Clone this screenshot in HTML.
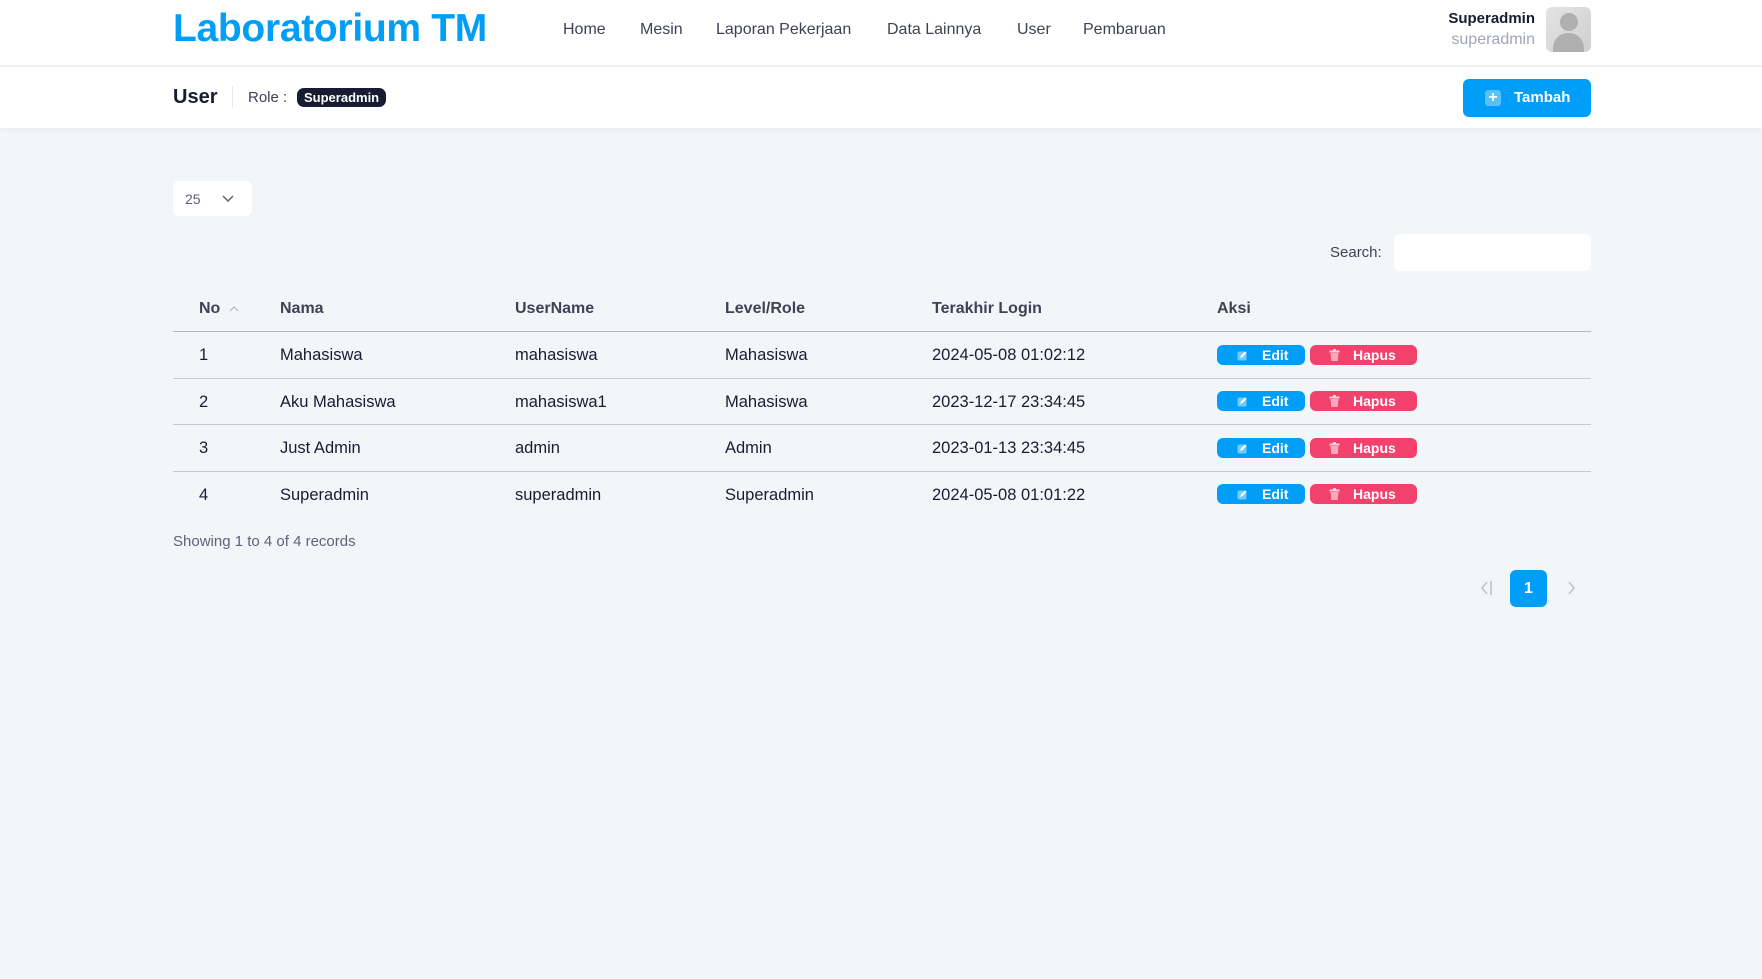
<!DOCTYPE html>
<html><head><meta charset="utf-8"><style>
*{margin:0;padding:0;box-sizing:border-box}
body{width:1762px;height:979px;background:#f3f6f9;font-family:"Liberation Sans",sans-serif;color:#3f4254;position:relative;overflow:hidden}
.a{position:absolute;white-space:nowrap}
.hdr{position:absolute;left:0;top:0;width:1762px;height:66px;background:#fff;border-bottom:1px solid #eef0f4}
.sub{position:absolute;left:0;top:67px;width:1762px;height:61px;background:#fff;box-shadow:0 2px 6px rgba(0,0,0,.04)}
.nav{font-size:16px;color:#3f4254;top:21px}
.th{font-size:16px;font-weight:bold;color:#3f4254;top:300px}
.td{font-size:16.5px;color:#181c32}
.line{position:absolute;left:173px;width:1418px;height:1px;background:#b5b8c4}
.btn{position:absolute;height:20px;border-radius:6px;color:#fff;font-size:14px;font-weight:bold;line-height:20px}
.e{background:#009ef7;left:1217px;width:88px}
.h{background:#f1416c;left:1310px;width:107px}
</style></head><body>
<div class="hdr"></div>
<div class="a" style="left:173px;top:7px;font-size:39px;font-weight:bold;color:#009ef7;letter-spacing:-0.3px">Laboratorium TM</div>
<div class="a nav" style="left:563px">Home</div>
<div class="a nav" style="left:640px">Mesin</div>
<div class="a nav" style="left:716px">Laporan Pekerjaan</div>
<div class="a nav" style="left:887px">Data Lainnya</div>
<div class="a nav" style="left:1017px">User</div>
<div class="a nav" style="left:1083px">Pembaruan</div>
<div class="a" style="right:227px;top:10px;font-size:15px;font-weight:bold;color:#181c32">Superadmin</div>
<div class="a" style="right:227px;top:31px;font-size:16px;color:#a1a5b7">superadmin</div>
<div class="a" style="left:1546px;top:7px;width:45px;height:45px;border-radius:6px;background:linear-gradient(135deg,#e4e4e4,#cfcfcf);overflow:hidden">
 <div style="position:absolute;left:14px;top:6px;width:18px;height:18px;border-radius:50%;background:#b0b0b0"></div>
 <div style="position:absolute;left:7px;top:26px;width:31px;height:24px;border-radius:15px 15px 0 0;background:#b0b0b0"></div>
</div>
<div class="sub"></div>
<div class="a" style="left:173px;top:86px;font-size:20px;font-weight:bold;color:#181c32">User</div>
<div class="a" style="left:232px;top:86px;width:1px;height:22px;background:#e4e6ef"></div>
<div class="a" style="left:248px;top:89px;font-size:15px;color:#3f4254">Role :</div>
<div class="a" style="left:297px;top:88px;height:19px;padding:0 7px;border-radius:7px;background:#181c32;color:#fff;font-size:13px;font-weight:bold;line-height:19px">Superadmin</div>
<div class="a" style="left:1463px;top:79px;width:128px;height:38px;border-radius:6px;background:#009ef7;color:#fff;font-size:15px;font-weight:bold;line-height:38px">
 <span style="position:absolute;left:22px;top:11px;width:16px;height:16px;border-radius:3px;background:rgba(255,255,255,.35);color:#fff;font-size:16px;line-height:15px;text-align:center">+</span>
 <span style="position:absolute;left:51px">Tambah</span></div>
<div class="a" style="left:173px;top:181px;width:79px;height:35px;border-radius:6px;background:#fff">
 <span class="a" style="left:12px;top:10px;font-size:14px;color:#5e6278">25</span>
 <svg class="a" style="left:49px;top:14px" width="12" height="8" viewBox="0 0 12 8"><path d="M1 1l5 5 5-5" fill="none" stroke="#5e6278" stroke-width="1.5"/></svg>
</div>
<div class="a" style="left:1330px;top:244px;font-size:15px;color:#3f4254">Search:</div>
<div class="a" style="left:1394px;top:234px;width:197px;height:37px;border-radius:6px;background:#fff"></div>
<div class="a th" style="left:199px">No</div>
<svg class="a" style="left:229px;top:306px" width="10" height="6" viewBox="0 0 10 6"><path d="M1 5l4-4 4 4" fill="none" stroke="#b5b5c3" stroke-width="1.2"/></svg>
<div class="a th" style="left:280px">Nama</div>
<div class="a th" style="left:515px">UserName</div>
<div class="a th" style="left:725px">Level/Role</div>
<div class="a th" style="left:932px">Terakhir Login</div>
<div class="a th" style="left:1217px">Aksi</div>
<div class="line" style="top:331px"></div>
<div class="line" style="top:378px;background:#c8cad3"></div>
<div class="line" style="top:424px;background:#c8cad3"></div>
<div class="line" style="top:471px;background:#c8cad3"></div>

<div class="a td" style="left:199px;top:346px">1</div><div class="a td" style="left:280px;top:346px">Mahasiswa</div><div class="a td" style="left:515px;top:346px">mahasiswa</div><div class="a td" style="left:725px;top:346px">Mahasiswa</div><div class="a td" style="left:932px;top:346px">2024-05-08 01:02:12</div>
<div class="a td" style="left:199px;top:393px">2</div><div class="a td" style="left:280px;top:393px">Aku Mahasiswa</div><div class="a td" style="left:515px;top:393px">mahasiswa1</div><div class="a td" style="left:725px;top:393px">Mahasiswa</div><div class="a td" style="left:932px;top:393px">2023-12-17 23:34:45</div>
<div class="a td" style="left:199px;top:439px">3</div><div class="a td" style="left:280px;top:439px">Just Admin</div><div class="a td" style="left:515px;top:439px">admin</div><div class="a td" style="left:725px;top:439px">Admin</div><div class="a td" style="left:932px;top:439px">2023-01-13 23:34:45</div>
<div class="a td" style="left:199px;top:486px">4</div><div class="a td" style="left:280px;top:486px">Superadmin</div><div class="a td" style="left:515px;top:486px">superadmin</div><div class="a td" style="left:725px;top:486px">Superadmin</div><div class="a td" style="left:932px;top:486px">2024-05-08 01:01:22</div>

<div class="btn e" style="top:345px"><svg class="a" style="left:20px;top:5px" width="11" height="11" viewBox="0 0 11 11"><rect x="0.5" y="1.5" width="9" height="9" rx="1.5" fill="rgba(255,255,255,.45)"/><path d="M3 8l1-2.5 4-4 1.5 1.5-4 4z" fill="#fff"/></svg><span class="a" style="left:45px">Edit</span></div>
<div class="btn h" style="top:345px"><svg class="a" style="left:19px;top:4px" width="11" height="12" viewBox="0 0 11 12"><rect x="0.5" y="1.5" width="10" height="2" fill="rgba(255,255,255,.75)"/><rect x="4" y="0" width="3" height="2" fill="rgba(255,255,255,.75)"/><path d="M1.5 4h8l-0.8 8h-6.4z" fill="rgba(255,255,255,.55)"/></svg><span class="a" style="left:43px">Hapus</span></div>
<div class="btn e" style="top:391px"><svg class="a" style="left:20px;top:5px" width="11" height="11" viewBox="0 0 11 11"><rect x="0.5" y="1.5" width="9" height="9" rx="1.5" fill="rgba(255,255,255,.45)"/><path d="M3 8l1-2.5 4-4 1.5 1.5-4 4z" fill="#fff"/></svg><span class="a" style="left:45px">Edit</span></div>
<div class="btn h" style="top:391px"><svg class="a" style="left:19px;top:4px" width="11" height="12" viewBox="0 0 11 12"><rect x="0.5" y="1.5" width="10" height="2" fill="rgba(255,255,255,.75)"/><rect x="4" y="0" width="3" height="2" fill="rgba(255,255,255,.75)"/><path d="M1.5 4h8l-0.8 8h-6.4z" fill="rgba(255,255,255,.55)"/></svg><span class="a" style="left:43px">Hapus</span></div>
<div class="btn e" style="top:438px"><svg class="a" style="left:20px;top:5px" width="11" height="11" viewBox="0 0 11 11"><rect x="0.5" y="1.5" width="9" height="9" rx="1.5" fill="rgba(255,255,255,.45)"/><path d="M3 8l1-2.5 4-4 1.5 1.5-4 4z" fill="#fff"/></svg><span class="a" style="left:45px">Edit</span></div>
<div class="btn h" style="top:438px"><svg class="a" style="left:19px;top:4px" width="11" height="12" viewBox="0 0 11 12"><rect x="0.5" y="1.5" width="10" height="2" fill="rgba(255,255,255,.75)"/><rect x="4" y="0" width="3" height="2" fill="rgba(255,255,255,.75)"/><path d="M1.5 4h8l-0.8 8h-6.4z" fill="rgba(255,255,255,.55)"/></svg><span class="a" style="left:43px">Hapus</span></div>
<div class="btn e" style="top:484px"><svg class="a" style="left:20px;top:5px" width="11" height="11" viewBox="0 0 11 11"><rect x="0.5" y="1.5" width="9" height="9" rx="1.5" fill="rgba(255,255,255,.45)"/><path d="M3 8l1-2.5 4-4 1.5 1.5-4 4z" fill="#fff"/></svg><span class="a" style="left:45px">Edit</span></div>
<div class="btn h" style="top:484px"><svg class="a" style="left:19px;top:4px" width="11" height="12" viewBox="0 0 11 12"><rect x="0.5" y="1.5" width="10" height="2" fill="rgba(255,255,255,.75)"/><rect x="4" y="0" width="3" height="2" fill="rgba(255,255,255,.75)"/><path d="M1.5 4h8l-0.8 8h-6.4z" fill="rgba(255,255,255,.55)"/></svg><span class="a" style="left:43px">Hapus</span></div>

<div class="a" style="left:173px;top:533px;font-size:15px;color:#5e6278">Showing 1 to 4 of 4 records</div>
<svg class="a" style="left:1481px;top:580px" width="12" height="16" viewBox="0 0 12 16"><path d="M6 2L1 8l5 6M10 1v14" fill="none" stroke="#b5b5c3" stroke-width="1.3"/></svg>
<div class="a" style="left:1510px;top:570px;width:37px;height:37px;border-radius:6px;background:#009ef7;color:#fff;font-size:16px;font-weight:bold;text-align:center;line-height:37px">1</div>
<svg class="a" style="left:1568px;top:581px" width="8" height="14" viewBox="0 0 8 14"><path d="M1 1l5 6-5 6" fill="none" stroke="#b5b5c3" stroke-width="1.3"/></svg>
</body></html>
